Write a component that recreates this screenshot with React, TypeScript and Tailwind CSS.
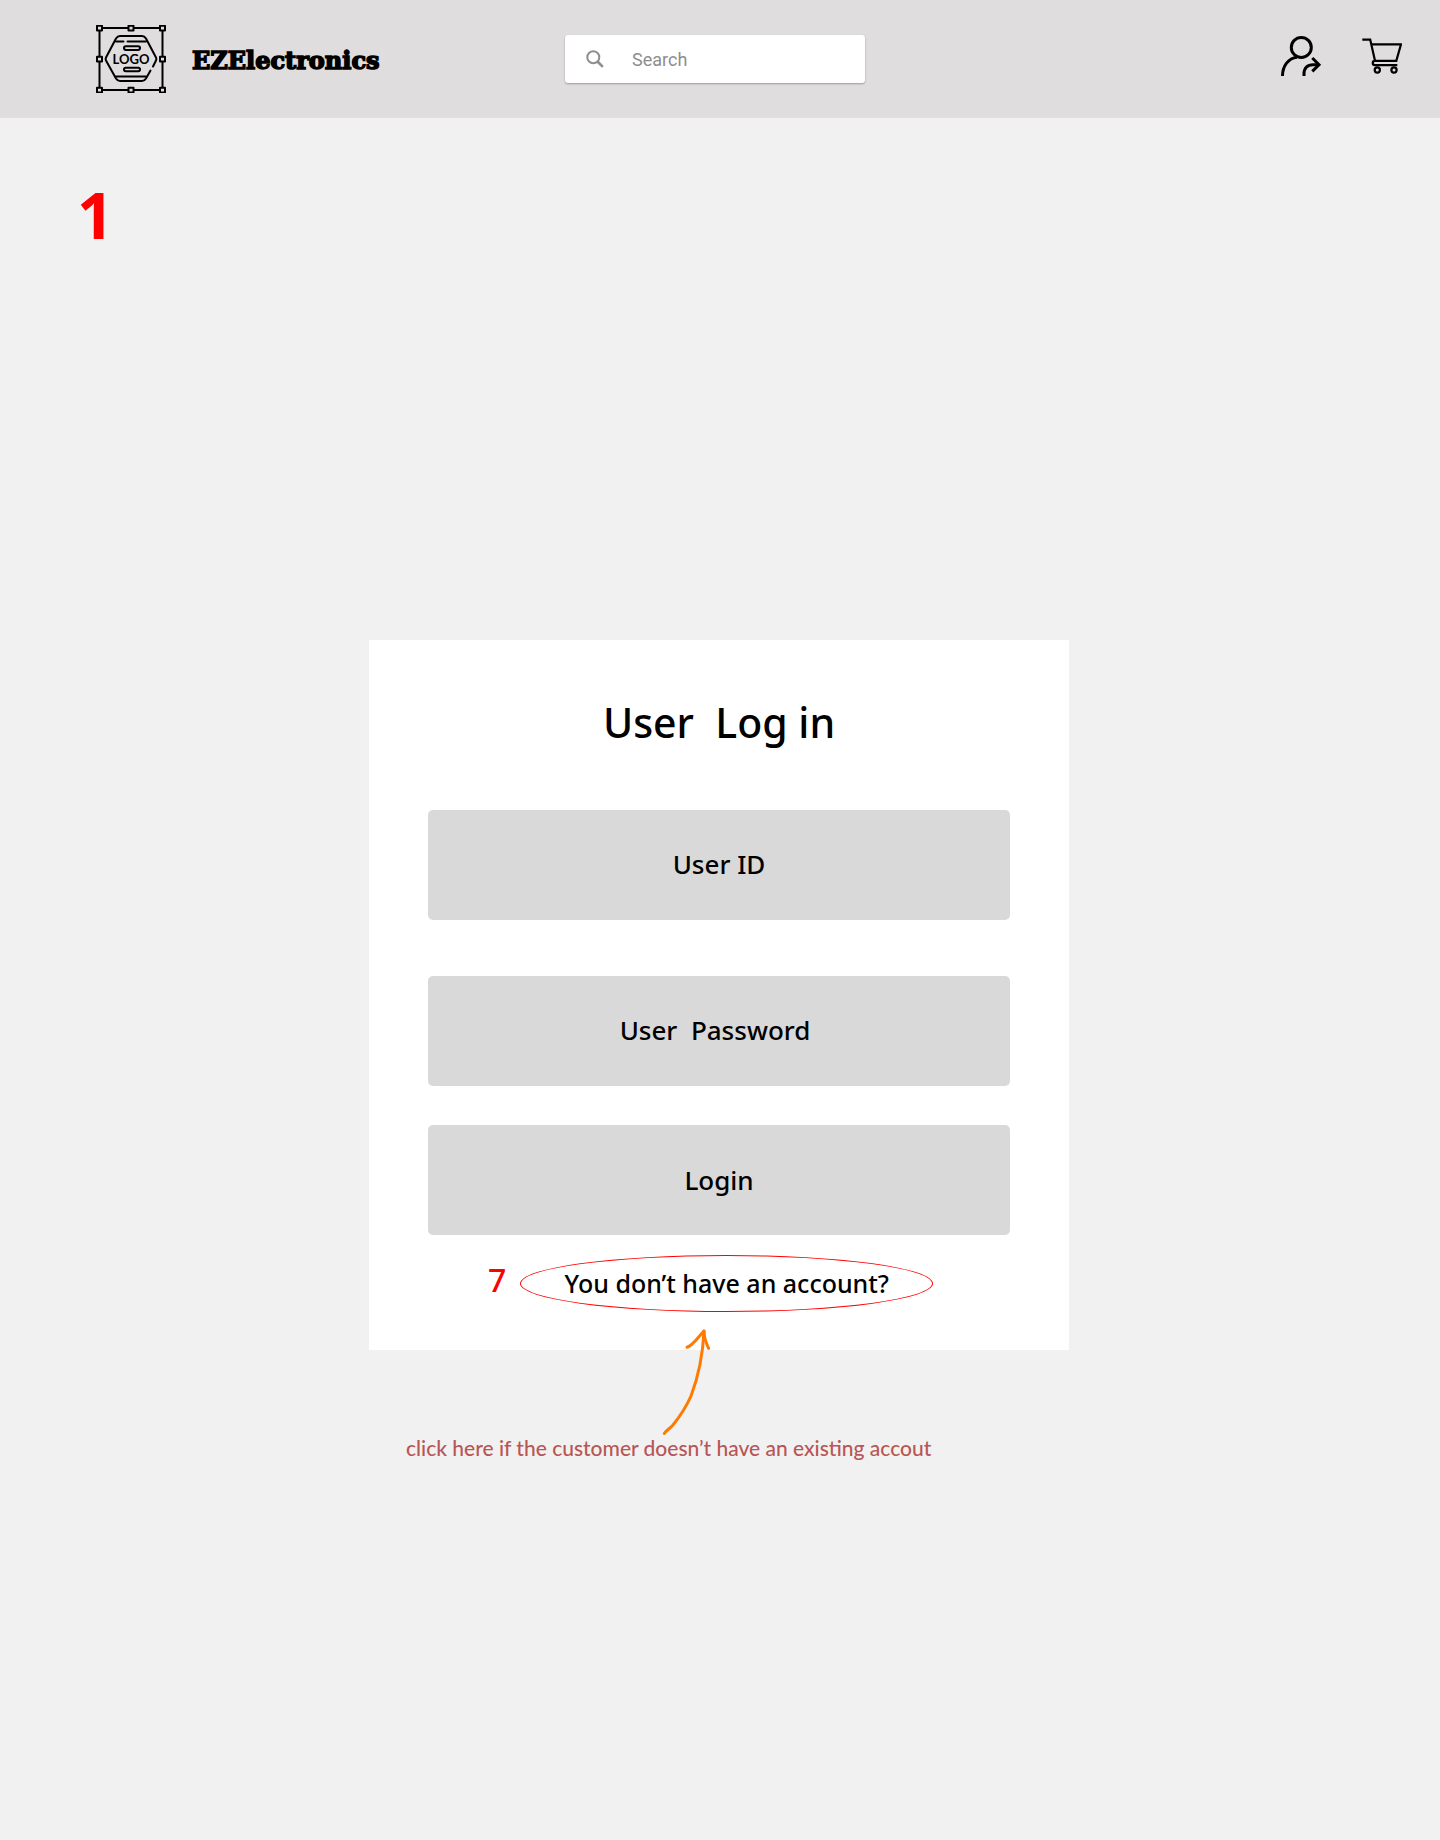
function LogoMark() {
  const handles = [
    [3.5, 3], [35, 3], [66.5, 3],
    [3.5, 34], [66.5, 34],
    [3.5, 65], [35, 65], [66.5, 65],
  ];
  return (
    <svg width="70" height="68" viewBox="0 0 70 68" fill="none" stroke="#000" strokeWidth="2" strokeLinecap="round" strokeLinejoin="round" aria-hidden="true">
      <rect x="3.5" y="3" width="63" height="62" />
      {handles.map(([x, y]) => (
        <rect key={`${x}-${y}`} x={x - 2.5} y={y - 2.2} width="5" height="4.6" fill="#dfddde" />
      ))}
      <path d="M57 41.5 L60 35.5 Q60.8 34 60 32.5 L50 13.5 Q48.5 11 46 11 H24 Q21.5 11 20 13.5 L10 32.5 Q9.2 34 10 35.5 L20 53.5 Q21.5 56 24 56 H46 Q48.5 56 50 53.5 L54.5 45.5" />
      <path d="M20 16.5 H27.5 M31.5 16.5 H50 M20 51.5 H50" />
      <rect x="28" y="21.3" width="16" height="3.6" rx="1.8" />
      <rect x="28" y="42.7" width="16" height="3.6" rx="1.8" />
      <text x="35" y="38.5" textAnchor="middle" fill="#000" stroke="none" className="font-['Lato'] text-[13px] font-bold">LOGO</text>
    </svg>
  );
}

function UserArrowIcon() {
  return (
    <svg width="42" height="42" viewBox="0 0 42 42" fill="none" stroke="#000" strokeWidth="3" aria-hidden="true">
      <circle cx="21.3" cy="12.4" r="10" />
      <path d="M2.5 41 C2.5 31 8.5 23 17 22.2" />
      <path d="M24 41 V39 C24 33 27.5 29.7 33 29.7 H39" />
      <path d="M32.3 23 L39 29.7 L32.3 36.4" />
    </svg>
  );
}

function CartIcon() {
  return (
    <svg width="40" height="37" viewBox="0 0 40 37" fill="none" stroke="#000" strokeWidth="2.2" aria-hidden="true">
      <path d="M0.3 1.6 H8.2 L13 22.8" />
      <path d="M9.5 6.3 H39 L34.3 22.8 H13 C10 22.8 10 27.2 13 27.2 H35.3" />
      <circle cx="15.3" cy="32" r="2.6" />
      <circle cx="32" cy="32" r="2.6" />
    </svg>
  );
}

function SearchIcon() {
  return (
    <svg width="18" height="18" viewBox="0 0 18 18" fill="none" stroke="#8e8e8e" strokeWidth="2" aria-hidden="true">
      <circle cx="7.3" cy="7.3" r="6" />
      <path d="M11.5 11.5 L16.8 16.8" strokeWidth="2.6" />
    </svg>
  );
}

const field =
  "block h-[110px] w-full rounded-[5px] bg-[#d9d9d9] text-center font-['Noto_Sans',sans-serif] text-[26px] font-medium text-black placeholder:text-black placeholder:opacity-100";

export default function App() {
  return (
    <div className="min-h-screen bg-[#f1f1f1] font-['Noto_Sans',sans-serif] text-black">
      <header className="grid h-[118px] grid-cols-[1fr_300px_1fr] items-center bg-[#dfddde] pr-[10px]">
        <a href="#home" className="flex items-center gap-[26px] pl-24">
          <LogoMark />
          <span className="pt-1 font-['DejaVu_Serif',serif] text-[24px] font-bold [-webkit-text-stroke:1.5px_#000]">EZElectronics</span>
        </a>
        <label className="flex h-12 items-center gap-7 rounded-[3px] bg-white pl-[21px] shadow-[0_1px_2px_rgba(0,0,0,0.3)]">
          <SearchIcon />
          <input type="search" aria-label="Search" placeholder="Search" className="h-full min-w-0 flex-1 bg-transparent font-['Roboto',sans-serif] text-[18px] outline-none placeholder:text-[#8e8e8e]" />
        </label>
        <div className="flex items-center justify-end gap-10 pr-7 pb-[6px]">
          <button type="button" aria-label="Account"><UserArrowIcon /></button>
          <button type="button" aria-label="Cart"><CartIcon /></button>
        </div>
      </header>

      <main className="pr-[18px] pb-20 pl-4">
        <p className="pt-[65px] pl-[61px] text-[64px] leading-[64px] font-bold text-[#ff0000]">1</p>

        <div className="mx-auto mt-[393px] max-w-[700px]">
          <form className="bg-white px-[59px] pt-[55px] pb-[38px]" onSubmit={(e) => e.preventDefault()}>
            <h1 className="text-center text-[41px] leading-[54px] font-medium whitespace-pre">{"User  Log in"}</h1>
            <div className="mt-[61px]">
              <input type="text" aria-label="User ID" placeholder="User ID" className={field + " pb-[2px]"} />
            </div>
            <div className="mt-14">
              <input type="password" aria-label="User Password" placeholder="User  Password" className={field + " pr-2 pb-[2px]"} />
            </div>
            <button type="submit" className={field + " mt-[39px]"}>Login</button>
            <div className="mt-5 flex items-start gap-[14px] pl-[60px]">
              <span className="text-[32px] leading-[50px] font-medium text-[#ff0000]">7</span>
              <a href="#register" className="flex h-[57px] w-[413px] items-center justify-center rounded-[50%] border border-[#ff0000] text-[25px] font-medium">You don’t have an account?</a>
            </div>
          </form>

          <div className="relative pt-[80px] pl-[37px]">
            <svg className="absolute -top-6 left-[291px]" width="54" height="112" viewBox="660 1326 54 112" fill="none" stroke="#ff7a00" strokeWidth="3" strokeLinecap="round" strokeLinejoin="round" aria-hidden="true">
              <path d="M664.3 1433.5 C666 1430.5 670 1428.5 673 1425 C681 1415 687 1405 691 1396 C699 1375 703 1352 704 1331" />
              <path d="M687 1347.3 C693 1345.5 698 1337 704 1331 C704 1337 706 1343 708.6 1348.3" />
            </svg>
            <p className="font-['Lato',sans-serif] text-[21px] leading-[36px] font-medium text-[#b85656]">click here if the customer doesn’t have an existing accout</p>
          </div>
        </div>
      </main>
    </div>
  );
}
